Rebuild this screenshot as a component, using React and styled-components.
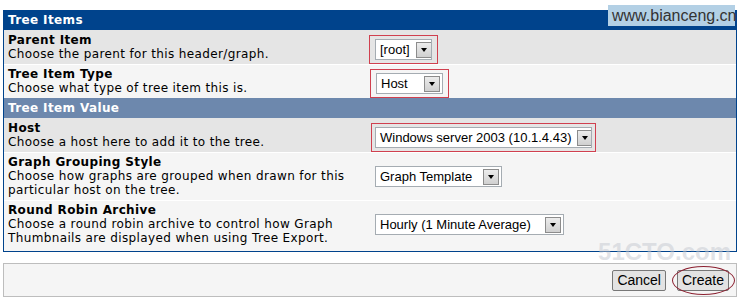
import React from "react";
import styled, { createGlobalStyle } from "styled-components";

const GlobalStyle = createGlobalStyle`
  html, body {
    margin: 0;
    padding: 0;
    background: #ffffff;
  }
  body {
    font-family: "DejaVu Sans", Verdana, sans-serif;
  }
`;

const Page = styled.div`
  position: relative;
  width: 741px;
  height: 303px;
  padding: 10px 4px 0 3px;
  box-sizing: border-box;
  overflow: hidden;
`;

const Panel = styled.div`
  border: 1px solid #00438c;
  border-top: none;
  background: #f5f5f5;
`;

const SectionHeader = styled.div`
  height: 20px;
  line-height: 20px;
  padding-left: 4px;
  color: #ffffff;
  font-weight: bold;
  font-size: 12px;
  letter-spacing: 0.37px;
  background: ${(p) => (p.$dark ? "#00438c" : "#6d88ad")};
`;

const Row = styled.div`
  display: grid;
  grid-template-columns: 366px 1fr;
  height: ${(p) => p.$h}px;
  background: ${(p) => (p.$shade ? "#e5e5e5" : "#f5f5f5")};
  border-top: 1px solid ${(p) => (p.$line ? "#ffffff" : "transparent")};
  box-sizing: border-box;
`;

const Label = styled.div`
  padding: 2px 4px 0 4px;
  font-size: 12px;
  letter-spacing: 0.37px;
  line-height: 14px;
  color: #000000;

  strong {
    display: block;
    font-weight: bold;
  }
`;

const Field = styled.div`
  display: flex;
  align-items: flex-start;
  padding-top: ${(p) => p.$top || 7}px;
`;

const Marked = styled.div`
  display: flex;
  border: 1px solid #d0404f;
  padding: ${(p) => p.$pad || "3px 5px"};
  margin-left: ${(p) => p.$left || 0}px;
  margin-top: -3px;
`;

const SelectBox = styled.div`
  display: flex;
  flex: none;
  align-items: center;
  gap: 6px;
  justify-content: space-between;
  width: ${(p) => p.$w}px;
  height: 21px;
  box-sizing: border-box;
  margin-left: ${(p) => p.$left || 0}px;
  border: 1px solid #a5acb2;
  background: #ffffff;
  font-family: "Liberation Sans", Arial, sans-serif;
  font-size: 13px;
  color: #000000;
  padding: 0 2px 0 4px;
  white-space: nowrap;
  overflow: hidden;
`;

const DropButton = styled.span`
  width: 16px;
  height: 16px;
  flex: none;
  box-sizing: border-box;
  border: 1px solid #8c8c8c;
  background: linear-gradient(#ececec, #d0d0d0);
  display: flex;
  align-items: center;
  justify-content: center;

  &::after {
    content: "";
    border-left: 3px solid transparent;
    border-right: 3px solid transparent;
    border-top: 4px solid #000000;
  }
`;

const ButtonBar = styled.div`
  margin-top: 11px;
  height: 34px;
  border: 1px solid #bdbdbd;
  background: #f5f5f5;
  display: flex;
  justify-content: flex-end;
  align-items: center;
  gap: 11px;
  padding-right: 7px;
  box-sizing: border-box;
`;

const Button = styled.button`
  position: relative;
  height: 21px;
  padding: 0 4px;
  font-family: "Liberation Sans", Arial, sans-serif;
  font-size: 14px;
  color: #000000;
  background: #e3e3e3;
  border: 1px solid #777777;
  border-radius: 2px;
`;

const Ring = styled.span`
  position: absolute;
  left: -6px;
  top: -5px;
  right: -7px;
  bottom: -5px;
  border: 1px solid #8b2030;
  border-radius: 50%;
  pointer-events: none;
`;

const SiteMark = styled.div`
  position: absolute;
  top: 5px;
  right: 6px;
  width: 127px;
  height: 21px;
  line-height: 21px;
  padding-left: 4px;
  box-sizing: border-box;
  background: #b3d0e5;
  color: #333333;
  font-family: "Liberation Sans", Arial, sans-serif;
  font-size: 16px;
  white-space: nowrap;
`;

const BlogMark = styled.div`
  position: absolute;
  right: 10px;
  top: 238px;
  color: rgba(195, 200, 208, 0.5);
  font-family: "Liberation Sans", Arial, sans-serif;
  font-weight: bold;
  font-size: 24px;
  pointer-events: none;
`;

function Select({ value, width, left }) {
  return (
    <SelectBox $w={width} $left={left}>
      <span>{value}</span>
      <DropButton />
    </SelectBox>
  );
}

export default function App() {
  return (
    <>
      <GlobalStyle />
      <Page>
        <Panel>
          <SectionHeader $dark>Tree Items</SectionHeader>
          <Row $shade $h={34}>
            <Label>
              <strong>Parent Item</strong>
              Choose the parent for this header/graph.
            </Label>
            <Field>
              <Marked $left={-1}>
                <Select value="[root]" width={57} />
              </Marked>
            </Field>
          </Row>
          <Row $line $h={34}>
            <Label>
              <strong>Tree Item Type</strong>
              Choose what type of tree item this is.
            </Label>
            <Field>
              <Marked $left={0}>
                <Select value="Host" width={67} />
              </Marked>
            </Field>
          </Row>
          <SectionHeader>Tree Item Value</SectionHeader>
          <Row $shade $h={34}>
            <Label>
              <strong>Host</strong>
              Choose a host here to add it to the tree.
            </Label>
            <Field>
              <Marked $left={1} $pad="3px 3px">
                <Select value="Windows server 2003 (10.1.4.43)" width={217} />
              </Marked>
            </Field>
          </Row>
          <Row $line $h={48}>
            <Label>
              <strong>Graph Grouping Style</strong>
              Choose how graphs are grouped when drawn for this particular host
              on the tree.
            </Label>
            <Field $top={13}>
              <Select value="Graph Template" width={127} left={5} />
            </Field>
          </Row>
          <Row $line $h={51}>
            <Label>
              <strong>Round Robin Archive</strong>
              Choose a round robin archive to control how Graph Thumbnails are
              displayed when using Tree Export.
            </Label>
            <Field $top={13}>
              <Select value="Hourly (1 Minute Average)" width={189} left={5} />
            </Field>
          </Row>
        </Panel>
        <ButtonBar>
          <Button>Cancel</Button>
          <Button>
            Create
            <Ring />
          </Button>
        </ButtonBar>
        <SiteMark>www.bianceng.cn</SiteMark>
        <BlogMark>51CTO.com</BlogMark>
      </Page>
    </>
  );
}
